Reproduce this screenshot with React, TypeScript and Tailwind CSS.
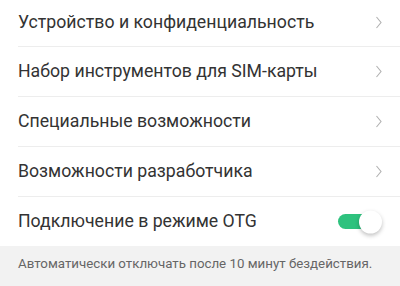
import React from "react"

const rows = [
  "Устройство и конфиденциальность",
  "Набор инструментов для SIM-карты",
  "Специальные возможности",
  "Возможности разработчика",
]

function Chevron() {
  return (
    <svg width="8" height="13" viewBox="0 0 8 13" className="mr-[17px]">
      <path d="M1.5 1 L6 6.5 L1.5 12" fill="none" stroke="#b0b0b0" strokeWidth="1.1" />
    </svg>
  )
}

export default function App() {
  return (
    <div className="w-[400px] h-[286px] overflow-hidden bg-white" style={{ fontFamily: "Roboto, sans-serif" }}>
      {rows.map((label, i) => (
        <div key={label} className="pl-[18px]">
          <div
            className={`flex items-center justify-between border-b border-[#ededed] ${
              i === 0 ? "h-[47px] pb-[2px]" : "h-[50px]"
            }`}
          >
            <span className="text-[17.7px] text-[#333333]">{label}</span>
            <Chevron />
          </div>
        </div>
      ))}

      <div className="flex h-[49px] items-center justify-between pl-[18px] pr-[24px]">
        <span className="text-[17.7px] text-[#333333]">Подключение в режиме OTG</span>
        <div className="relative h-[15px] w-[38px] rounded-full bg-[#2ec27e]">
          <div className="absolute -right-[6px] top-1/2 h-[23px] w-[23px] -translate-y-1/2 rounded-full bg-white shadow-[0_2px_4px_rgba(0,0,0,0.25)]" />
        </div>
      </div>

      <div className="h-[40px] bg-[#f2f2f2] px-[18px] pt-[8px]">
        <p className="whitespace-nowrap text-[13.3px] text-[#666666]">Автоматически отключать после 10 минут бездействия.</p>
      </div>
    </div>
  )
}
